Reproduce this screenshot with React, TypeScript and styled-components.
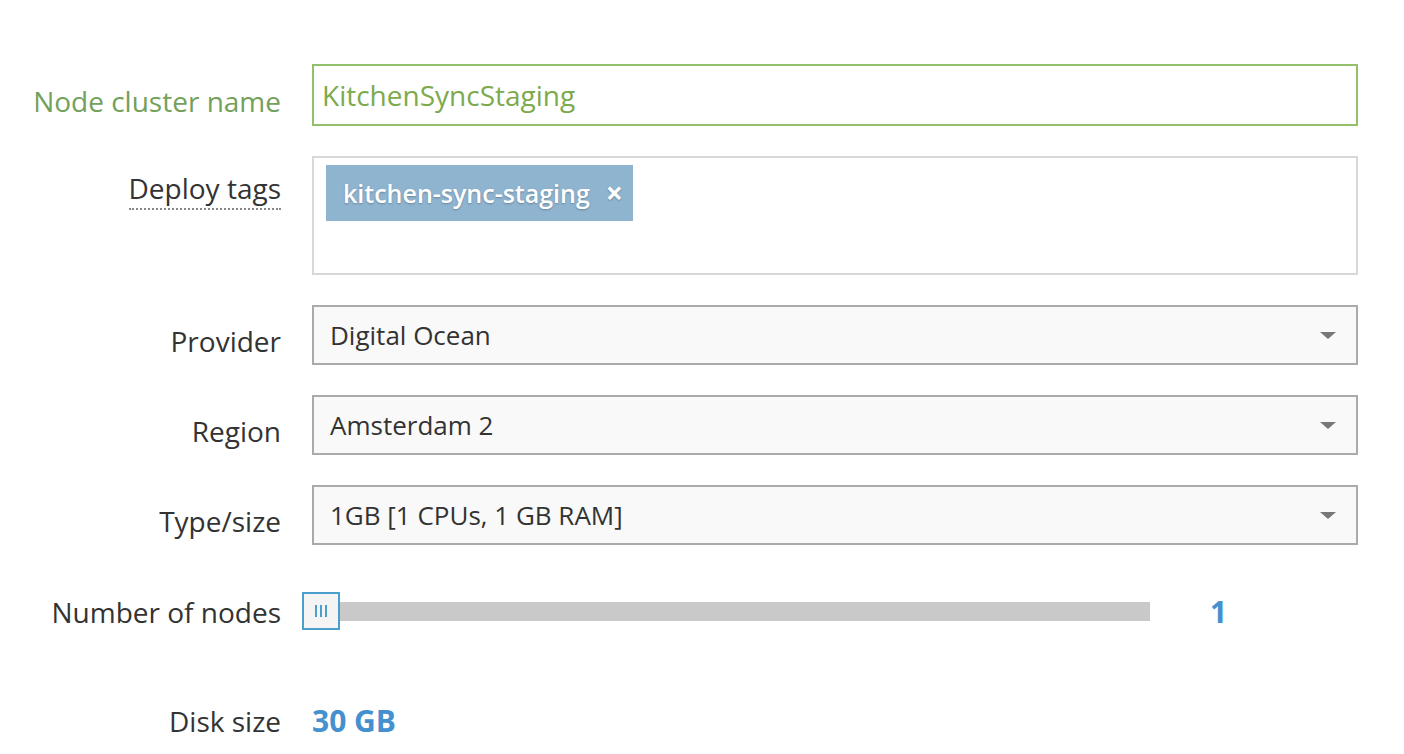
import React from 'react'
import styled, { createGlobalStyle } from 'styled-components'

const Global = createGlobalStyle`
  html, body {
    margin: 0;
    padding: 0;
    background: #fff;
  }
  body {
    font-family: 'Open Sans', 'Noto Sans', sans-serif;
    color: #333;
  }
`

const Form = styled.form`
  padding: 64px 46px 0 0;
  display: flex;
  flex-direction: column;
`

const Row = styled.div<{ gap?: number; top?: boolean }>`
  display: flex;
  align-items: ${(p) => (p.top ? 'flex-start' : 'center')};
  margin-bottom: ${(p) => (p.gap === undefined ? 30 : p.gap)}px;
`

const Label = styled.label<{ valid?: boolean; hint?: boolean; offset?: number }>`
  flex: 0 0 281px;
  box-sizing: border-box;
  text-align: right;
  margin-right: 31px;
  padding-top: ${(p) => (p.offset === undefined ? 12 : p.offset)}px;
  font-size: 28px;
  line-height: 36px;
  color: ${(p) => (p.valid ? '#73a05a' : '#333')};
  span {
    border-bottom: ${(p) => (p.hint ? 'dotted 2px #888' : 'none')};
    padding-bottom: 1px;
  }
`

const TextInput = styled.input`
  flex: 1;
  height: 62px;
  box-sizing: border-box;
  border: solid 2px #93c06a;
  padding: 0 8px;
  font-family: inherit;
  font-size: 28px;
  color: #7caa4c;
  outline: none;
`

const TagBox = styled.div`
  flex: 1;
  height: 119px;
  box-sizing: border-box;
  border: solid 2px #d8d8d8;
  padding: 7px 12px;
  display: flex;
  align-items: flex-start;
`

const Tag = styled.div`
  display: flex;
  align-items: center;
  height: 56px;
  padding: 0 10px 0 17px;
  background-color: #8fb4cf;
  color: #fff;
  font-size: 25px;
  font-weight: 600;
  text-shadow: 0 1px 2px rgba(0, 0, 0, 0.25);
`

const TagRemove = styled.span`
  margin-left: 16px;
  font-size: 30px;
  line-height: 1;
  font-weight: 700;
`

const Select = styled.div`
  flex: 1;
  height: 60px;
  box-sizing: border-box;
  border: solid 2px #aaa;
  background-color: #f9f9f9;
  display: flex;
  align-items: center;
  justify-content: space-between;
  padding: 0 20px 0 16px;
  font-size: 26px;
  color: #333;
`

const Caret = styled.span`
  width: 0;
  height: 0;
  border-left: 8px solid transparent;
  border-right: 8px solid transparent;
  border-top: 7px solid #777;
`

const SliderWrap = styled.div`
  flex: 1;
  display: flex;
  align-items: center;
`

const Track = styled.div`
  position: relative;
  width: 848px;
  height: 19px;
  background-color: #c9c9c9;
  margin-left: -10px;
`

const Handle = styled.div`
  position: absolute;
  left: 0;
  top: -10px;
  width: 38px;
  height: 38px;
  box-sizing: border-box;
  border: solid 2px #4aa0cc;
  background-color: #f4f4f4;
  display: flex;
  align-items: center;
  justify-content: center;
  gap: 3px;
  i {
    display: block;
    width: 2px;
    height: 12px;
    background-color: #4aa0cc;
  }
`

const Value = styled.span`
  color: #4590cf;
  font-weight: 700;
  font-size: 30px;
`

const SliderValue = styled(Value)`
  margin-left: 60px;
`

function App() {
  return (
    <>
      <Global />
      <Form>
        <Row>
          <Label valid>Node cluster name</Label>
          <TextInput defaultValue="KitchenSyncStaging" />
        </Row>
        <Row top>
          <Label hint offset={14}>
            <span>Deploy tags</span>
          </Label>
          <TagBox>
            <Tag>
              kitchen-sync-staging
              <TagRemove>×</TagRemove>
            </Tag>
          </TagBox>
        </Row>
        <Row>
          <Label>Provider</Label>
          <Select>
            Digital Ocean
            <Caret />
          </Select>
        </Row>
        <Row>
          <Label>Region</Label>
          <Select>
            Amsterdam 2
            <Caret />
          </Select>
        </Row>
        <Row gap={46}>
          <Label>Type/size</Label>
          <Select>
            1GB [1 CPUs, 1 GB RAM]
            <Caret />
          </Select>
        </Row>
        <Row gap={68}>
          <Label offset={0}>Number of nodes</Label>
          <SliderWrap>
            <Track>
              <Handle>
                <i />
                <i />
                <i />
              </Handle>
            </Track>
            <SliderValue>1</SliderValue>
          </SliderWrap>
        </Row>
        <Row>
          <Label offset={0}>Disk size</Label>
          <Value>30 GB</Value>
        </Row>
      </Form>
    </>
  )
}

export default App
